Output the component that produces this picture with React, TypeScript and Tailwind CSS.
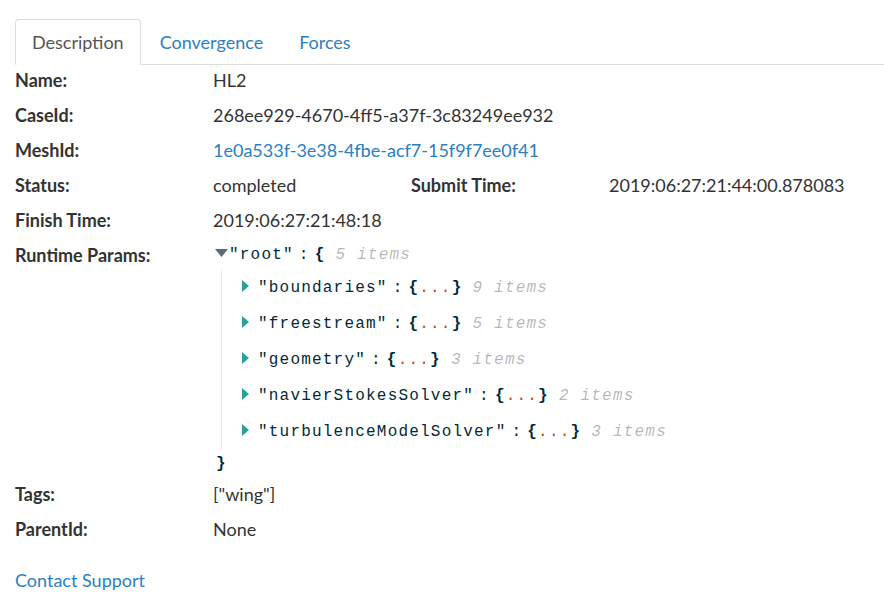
import React from 'react'

const tabs = ['Description', 'Convergence', 'Forces']

const children = [
  { key: 'boundaries', size: 9 },
  { key: 'freestream', size: 5 },
  { key: 'geometry', size: 3 },
  { key: 'navierStokesSolver', size: 2 },
  { key: 'turbulenceModelSolver', size: 3 },
]

function Caret() {
  return (
    <svg width="7" height="12" viewBox="0 0 7 12" className="mr-[9px] mb-[4px] shrink-0">
      <polygon points="0,0 7,6 0,12" fill="#2aa198" />
    </svg>
  )
}

function JsonView() {
  return (
    <div className="font-['Liberation_Mono',monospace] text-[16px] tracking-[1.2px] text-[#002b36]">
      <div className="flex items-center h-[24px]">
        <svg width="13" height="8" viewBox="0 0 13 8" className="ml-[2px] mr-[1px] mb-[5px]">
          <polygon points="0,0 13,0 6.5,8" fill="#586e75" />
        </svg>
        <span>"root"</span>
        <span className="mx-[5px]">:</span>
        <span className="font-bold">{'{'}</span>
        <span className="ml-[10px] italic text-black/30">5 items</span>
      </div>
      <div className="ml-[8px] mt-[3px] border-l border-[#ebebeb] pl-[20px]">
        {children.map((c) => (
          <div key={c.key} className="flex items-center h-[36px]">
            <Caret />
            <span>"{c.key}"</span>
            <span className="mx-[5px]">:</span>
            <span className="font-bold">{'{'}</span>
            <span className="text-[#cb4b16]">...</span>
            <span className="font-bold">{'}'}</span>
            <span className="ml-[10px] italic text-black/30">{c.size} items</span>
          </div>
        ))}
      </div>
      <div className="h-[24px] mt-[2px] ml-[3px] font-bold leading-[24px]">{'}'}</div>
    </div>
  )
}

function Row({ label, children, className = '' }: { label: string; children: React.ReactNode; className?: string }) {
  return (
    <div className={`grid grid-cols-[198px_198px_198px_1fr] leading-[24px] ${className}`}>
      <div className="font-bold">{label}</div>
      {children}
    </div>
  )
}

export default function App() {
  return (
    <div className="min-h-screen bg-white pt-[19px] font-['Lato','Liberation_Sans',sans-serif] text-[18px] text-[#333]">
      <ul className="flex ml-[15px] border-b border-[#ddd]">
        {tabs.map((t, i) => (
          <li key={t} className="-mb-px mr-[2px]">
            <a
              className={`block px-[16px] py-[10px] leading-[24px] border rounded-t-[4px] ${
                i === 0
                  ? 'border-[#ddd] border-b-white bg-white text-[#555]'
                  : 'border-transparent text-[#2a80c2]'
              }`}
            >
              {t}
            </a>
          </li>
        ))}
      </ul>

      <div className="pl-[15px] mt-[3px] flex flex-col">
        <Row label="Name:" className="mb-[11px]">
          <div>HL2</div>
        </Row>
        <Row label="CaseId:" className="mb-[11px]">
          <div className="col-span-3">268ee929-4670-4ff5-a37f-3c83249ee932</div>
        </Row>
        <Row label="MeshId:" className="mb-[11px]">
          <div className="col-span-3 text-[#2a80c2]">1e0a533f-3e38-4fbe-acf7-15f9f7ee0f41</div>
        </Row>
        <Row label="Status:" className="mb-[11px]">
          <div>completed</div>
          <div className="font-bold">Submit Time:</div>
          <div>2019:06:27:21:44:00.878083</div>
        </Row>
        <Row label="Finish Time:" className="mb-[11px]">
          <div className="col-span-3">2019:06:27:21:48:18</div>
        </Row>
        <Row label="Runtime Params:" className="mb-[6px]">
          <div className="col-span-3">
            <JsonView />
          </div>
        </Row>
        <Row label="Tags:" className="mb-[11px]">
          <div>["wing"]</div>
        </Row>
        <Row label="ParentId:">
          <div>None</div>
        </Row>
        <a className="mt-[27px] leading-[24px] text-[#2a80c2]">Contact Support</a>
      </div>
    </div>
  )
}
